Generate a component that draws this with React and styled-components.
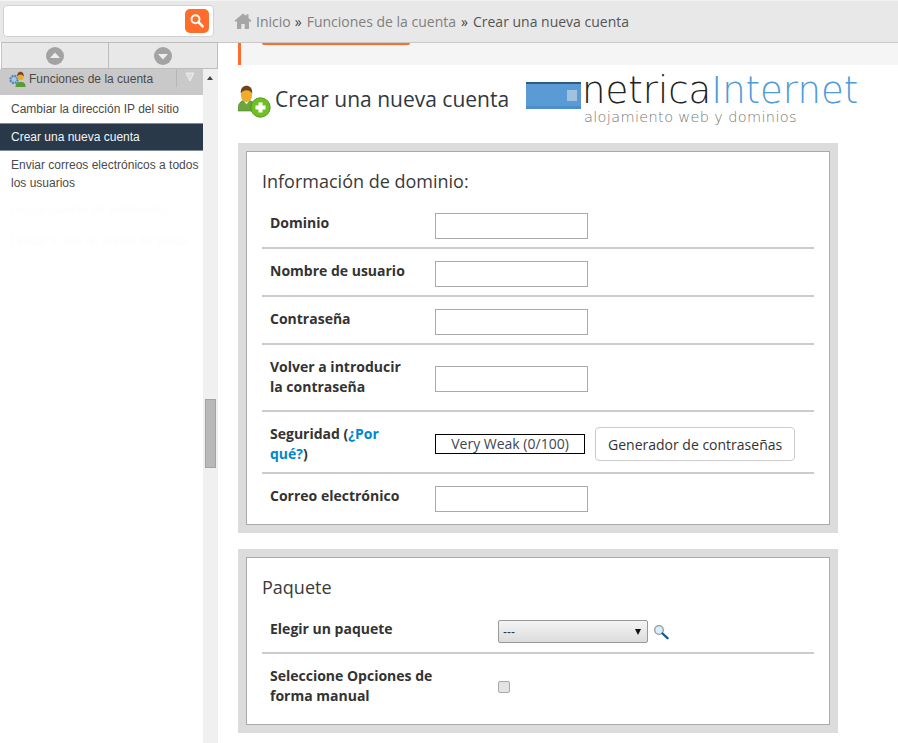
import React from "react";
import styled, { createGlobalStyle } from "styled-components";

const Global = createGlobalStyle`
  html, body { margin: 0; padding: 0; background: #fff; }
  body { font-family: "Open Sans", "Liberation Sans", sans-serif; color: #333; }
  * { box-sizing: border-box; }
`;

const Page = styled.div`
  display: grid;
  grid-template-columns: 218px 680px;
  width: 898px;
  height: 743px;
  overflow: hidden;
`;

const Sidebar = styled.aside`
  display: flex;
  flex-direction: column;
  height: 743px;
  font-family: "Liberation Sans", Arial, sans-serif;
`;

const SearchArea = styled.div`
  height: 42px;
  background: #e8e8e8;
  padding: 5px 4px 5px 3px;
  border-right: 1px solid #e8e8e8;
  border-top: 1px solid #f4f4f4;
`;

const SearchBox = styled.div`
  display: flex;
  align-items: center;
  justify-content: flex-end;
  width: 211px;
  height: 32px;
  margin-top: -1px;
  padding-right: 4px;
  background: #fff;
  border: 1px solid #d2d2d2;
  border-radius: 4px;
`;

const SearchButton = styled.button`
  display: flex;
  align-items: center;
  justify-content: center;
  width: 24px;
  height: 24px;
  padding: 0;
  border: 0;
  border-radius: 5px;
  background: #ff6c2c;
`;

const ArrowRow = styled.div`
  display: grid;
  grid-template-columns: 108px 109px;
  height: 27px;
  margin-left: 1px;
  background: #e8e8e8;
  border-top: 1px solid #bdbdbd;
  border-bottom: 1px solid #bdbdbd;
`;

const ArrowCell = styled.div`
  display: flex;
  align-items: center;
  justify-content: center;
  border-left: ${(p) => (p.$first ? "1px solid #c4c4c4" : "0")};
  border-right: 1px solid #bdbdbd;
`;

const SideBody = styled.div`
  display: grid;
  grid-template-columns: 203px 15px;
  flex: 1;
  min-height: 0;
`;

const SideList = styled.nav`
  background: #fff;
  overflow: hidden;
`;

const Category = styled.div`
  display: flex;
  align-items: center;
  height: 26px;
  padding-left: 9px;
  background: #c9c9c9;
  font-size: 12px;
  color: #4a4a4a;
`;

const CategoryGlyph = styled.span`
  display: flex;
  margin-top: -6px;
`;

const CategoryLabel = styled.span`
  margin-left: 3px;
  margin-top: -6px;
  width: 147px;
  white-space: nowrap;
`;

const CategoryToggle = styled.span`
  display: flex;
  justify-content: center;
  width: 27px;
  height: 18px;
  margin-top: -8px;
  padding-top: 3px;
  border-left: 1px solid #b6b6b6;
`;

const SideItem = styled.a`
  display: block;
  padding: 4px 4px 4px 11px;
  font-size: 12px;
  line-height: 18px;
  color: ${(p) => (p.$active ? "#f2f4f6" : "#4a4a4a")};
  background: ${(p) => (p.$active ? "#29394a" : "#fff")};
  border-top: 1px solid ${(p) => (p.$active ? "#7f8c98" : "transparent")};
  border-bottom: 1px solid ${(p) => (p.$active ? "#7f8c98" : "transparent")};
`;

const FadedGroup = styled.div`
  padding-top: 4px;
`;

const FadedItem = styled.div`
  padding-left: 11px;
  height: 31px;
  font-size: 12px;
  line-height: 18px;
  color: #fdfdfd;
  white-space: nowrap;
`;

const Track = styled.div`
  position: relative;
  background: #f0f0f0;
`;

const TrackArrow = styled.span`
  position: absolute;
  left: 4px;
  top: 7px;
  width: 0;
  height: 0;
  border-left: 3.5px solid transparent;
  border-right: 3.5px solid transparent;
  border-bottom: 4px solid #444;
`;

const Thumb = styled.div`
  position: absolute;
  left: 2px;
  top: 330px;
  width: 11px;
  height: 69px;
  background: #b9b9b9;
  border: 1px solid #a3a3a3;
`;

const Main = styled.main`
  display: flex;
  flex-direction: column;
  min-width: 0;
`;

const Breadcrumb = styled.header`
  display: flex;
  align-items: center;
  height: 43px;
  padding: 0 0 1px 16px;
  background: #e8e8e8;
  border-top: 1px solid #f2f2f2;
  border-bottom: 1px solid #c8c8c8;
  font-size: 14px;
  white-space: nowrap;
`;

const Crumb = styled.span`
  color: ${(p) => (p.$current ? "#555" : "#808080")};
  margin-left: ${(p) => (p.$first ? "4px" : "0")};
`;

const CrumbSep = styled.span`
  color: #444;
  margin: 0 5px 0 ${(p) => p.$before}px;
`;

const Content = styled.div`
  padding: 0 60px 0 20px;
`;

const Notice = styled.div`
  height: 22px;
  margin-right: -60px;
  padding-left: 21px;
  background: #f5f5f5;
  border-left: 3px solid #ff6c2c;
`;

const NoticeButton = styled.div`
  width: 148px;
  height: 2px;
  background: #ff6c2c;
  border-radius: 0 0 3px 3px;
`;

const TitleRow = styled.div`
  display: flex;
  align-items: flex-start;
  height: 78px;
`;

const PageIcon = styled.span`
  display: flex;
  flex: none;
  margin-top: 20px;
  width: 37px;
`;

const PageTitle = styled.h1`
  flex: none;
  margin: 18px 0 0;
  width: 251px;
  font-size: 21px;
  line-height: 32px;
  font-weight: 400;
  color: #2f3742;
  white-space: nowrap;
`;

const Logo = styled.div`
  display: flex;
  flex: none;
  align-items: flex-start;
  margin-top: 6px;
`;

const LogoMark = styled.span`
  display: flex;
  margin-top: 11px;
  margin-right: 1px;
`;

const LogoText = styled.div`
  font-family: "DejaVu Sans", sans-serif;
  font-weight: 200;
  white-space: nowrap;
`;

const LogoName = styled.div`
  font-size: 37px;
  line-height: 40px;
  color: #222;
`;

const LogoAccent = styled.span`
  color: #4f9bd9;
`;

const LogoTag = styled.div`
  font-size: 14.5px;
  line-height: 15px;
  margin: -1px 0 0 2px;
  letter-spacing: 0.35px;
  color: #777;
`;

const Section = styled.section`
  width: 600px;
  padding: 8px;
  margin-bottom: 16px;
  background: #dcdcdc;
`;

const SectionInner = styled.div`
  padding: 0 15px;
  background: #fff;
  border: 1px solid #aaa;
`;

const SectionTitle = styled.h2`
  margin: 0;
  padding-top: 16px;
  font-size: 18px;
  line-height: 26px;
  font-weight: 400;
  color: #3a3a3a;
`;

const Row = styled.div`
  display: grid;
  grid-template-columns: ${(p) => p.$label}px 1fr;
  align-items: ${(p) => (p.$center ? "center" : "start")};
  padding: ${(p) => p.$pad || "12px 0 8px"};
  border-bottom: ${(p) => (p.$last ? "0" : "2px solid #ccc")};
`;

const Label = styled.div`
  margin-top: ${(p) => p.$shift || 0}px;
  padding-left: 8px;
  padding-right: 20px;
  font-size: 14px;
  line-height: 20px;
  font-weight: 700;
  color: #333;
`;

const HelpLink = styled.a`
  color: #0086cc;
`;

const TextInput = styled.input`
  display: block;
  width: 153px;
  height: 26px;
  margin-top: ${(p) => p.$offset || 0}px;
  padding: 2px 4px;
  background: #fff;
  border: 1px solid #aaa;
`;

const StrengthRow = styled.div`
  display: flex;
  align-items: center;
`;

const Strength = styled.div`
  width: 150px;
  height: 20px;
  font-size: 14px;
  line-height: 18px;
  text-align: center;
  color: #3c4654;
  background: #fff;
  border: 1px solid #000;
`;

const GenButton = styled.button`
  height: 34px;
  margin-left: 10px;
  padding: 0 12px;
  font-family: "Open Sans", sans-serif;
  font-size: 14px;
  color: #333;
  background: #fff;
  border: 1px solid #ccc;
  border-radius: 4px;
`;

const SelectLine = styled.div`
  display: flex;
  align-items: center;
`;

const SelectWrap = styled.div`
  position: relative;
  width: 150px;
  height: 23px;
`;

const PackageSelect = styled.select`
  display: block;
  width: 100%;
  height: 100%;
  padding: 0 4px;
  appearance: none;
  font-family: "Liberation Sans", sans-serif;
  font-size: 12px;
  color: #333;
  background: linear-gradient(#f4f4f4, #dcdcdc);
  border: 1px solid #999;
  border-radius: 2px;
`;

const SelectCaret = styled.span`
  position: absolute;
  right: 7px;
  top: 9px;
  width: 0;
  height: 0;
  border-left: 3px solid transparent;
  border-right: 3px solid transparent;
  border-top: 6px solid #111;
`;

const ZoomIcon = styled.span`
  display: flex;
  margin-left: 5px;
`;

const Check = styled.input`
  display: block;
  width: 12px;
  height: 12px;
  margin: 2px 0 0;
  appearance: none;
  background: #e4e4e4;
  border: 1px solid #a8a8a8;
  border-radius: 2px;
`;

const SearchGlyph = () => (
  <svg width="16" height="16" viewBox="0 0 16 16">
    <circle cx="6.5" cy="6.2" r="4" fill="none" stroke="#fff" strokeWidth="1.9" />
    <path d="M9.5 9.2 13.6 13.4" stroke="#fff" strokeWidth="2.6" strokeLinecap="round" />
  </svg>
);

const ArrowCircle = ({ up }) => (
  <svg width="18" height="18" viewBox="0 0 18 18">
    <circle cx="9" cy="9" r="9" fill="#a3a3a3" />
    <path d={up ? "M9 5.5 14 11H4Z" : "M9 12.5 14 7H4Z"} fill="#eee" />
  </svg>
);

const Home = () => (
  <svg width="18" height="16" viewBox="0 0 18 16">
    <path d="M9 0.5 0.5 7.8 1.6 9 3 8v8h4.3v-5h3.4v5H15V8l1.4 1 1.1-1.2L14.5 5V1.3h-2.2v1.8Z" fill="#a6a6a6" />
  </svg>
);

const CategoryIcon = () => (
  <svg width="17" height="16" viewBox="0 0 17 16">
    <circle cx="5" cy="8.5" r="3.6" fill="#a9c6e0" stroke="#4f86ba" strokeWidth="2.2" strokeDasharray="2 .8" />
    <path d="M6.5 16c0-3.500 1.500-5 3.500-5h3c2 0 3.600 1.500 3.600 5Z" fill="#5c9a36" />
    <circle cx="11.5" cy="6" r="3.2" fill="#eea92f" />
    <path d="M8.2 5.500C8 2 10 .8 11.500 .8s3.500 1.200 3.300 4.700c-1-1.500-2-1.800-3.300-1.800s-2.300.3-3.300 1.800Z" fill="#7a4a1c" />
  </svg>
);

const UserAdd = () => (
  <svg width="33" height="33" viewBox="0 0 33 33">
    <path d="M0 24c0-5 2-7 5-8.500h7c3 1.500 6 3.500 6 8.500v2H0Z" fill="#6aa63c" stroke="#4d8128" strokeWidth=".6" />
    <path d="M5.500 15.500l3 4 3-4Z" fill="#e4f0d0" />
    <ellipse cx="8.5" cy="10" rx="5.600" ry="7" fill="#f1ab2d" />
    <path d="M2.800 8.500C2.300 3 5.500 .8 8.500 .8s6.200 2.200 5.700 7.700c-1.500-2.500-3.200-3.300-5.700-3.300S4.300 6 2.800 8.500Z" fill="#6e4419" />
    <circle cx="22.5" cy="22.500" r="9.7" fill="#6fc020" stroke="#4d8f1c" strokeWidth=".9" />
    <path d="M20.500 17.500h4v3h3v4h-3v3h-4v-3h-3v-4h3Z" fill="#fff" />
  </svg>
);

const LogoBlock = () => (
  <svg width="55" height="27" viewBox="0 0 55 27">
    <rect width="55" height="27" fill="#5a9bd5" />
    <rect width="55" height="2" fill="#2f5d82" />
    <rect y="24" width="55" height="3" fill="#4a8fcc" />
    <rect x="41" y="8" width="10" height="11" fill="#a0c2de" />
  </svg>
);

const Magnifier = () => (
  <svg width="16" height="16" viewBox="0 0 16 16">
    <circle cx="6" cy="6" r="4.3" fill="#dcecf8" stroke="#8a9aa8" strokeWidth="1.3" />
    <path d="M9.5 9.500 14.500 14.200" stroke="#0f5a96" strokeWidth="2.3" strokeLinecap="round" />
  </svg>
);

const Toggle = () => (
  <svg width="10" height="10" viewBox="0 0 10 10">
    <path d="M1 1h8L5 9Z" fill="#dcdcdc" stroke="#f2f2f2" strokeWidth=".8" />
  </svg>
);

export default function App() {
  return (
    <Page>
      <Global />
      <Sidebar>
        <SearchArea>
          <SearchBox>
            <SearchButton aria-label="Buscar">
              <SearchGlyph />
            </SearchButton>
          </SearchBox>
        </SearchArea>
        <ArrowRow>
          <ArrowCell $first>
            <ArrowCircle up />
          </ArrowCell>
          <ArrowCell>
            <ArrowCircle />
          </ArrowCell>
        </ArrowRow>
        <SideBody>
          <SideList>
            <Category>
              <CategoryGlyph>
                <CategoryIcon />
              </CategoryGlyph>
              <CategoryLabel>Funciones de la cuenta</CategoryLabel>
              <CategoryToggle>
                <Toggle />
              </CategoryToggle>
            </Category>
            <SideItem>Cambiar la dirección IP del sitio</SideItem>
            <SideItem $active>Crear una nueva cuenta</SideItem>
            <SideItem>Enviar correos electrónicos a todos los usuarios</SideItem>
            <FadedGroup>
              <FadedItem>Forzar cambio de contraseña</FadedItem>
              <FadedItem>Limitar el uso de ancho de banda</FadedItem>
            </FadedGroup>
          </SideList>
          <Track>
            <TrackArrow />
            <Thumb />
          </Track>
        </SideBody>
      </Sidebar>
      <Main>
        <Breadcrumb>
          <Home />
          <Crumb $first>Inicio</Crumb>
          <CrumbSep $before={4}>»</CrumbSep>
          <Crumb>Funciones de la cuenta</Crumb>
          <CrumbSep $before={5}>»</CrumbSep>
          <Crumb $current>Crear una nueva cuenta</Crumb>
        </Breadcrumb>
        <Content>
          <Notice>
            <NoticeButton />
          </Notice>
          <TitleRow>
            <PageIcon>
              <UserAdd />
            </PageIcon>
            <PageTitle>Crear una nueva cuenta</PageTitle>
            <Logo>
              <LogoMark>
                <LogoBlock />
              </LogoMark>
              <LogoText>
                <LogoName>
                  netrica<LogoAccent>Internet</LogoAccent>
                </LogoName>
                <LogoTag>alojamiento web y dominios</LogoTag>
              </LogoText>
            </Logo>
          </TitleRow>
          <Section>
            <SectionInner>
              <SectionTitle>Información de dominio:</SectionTitle>
              <Row $label={173} $pad="19px 0 8px">
                <Label>Dominio</Label>
                <TextInput />
              </Row>
              <Row $label={173}>
                <Label>Nombre de usuario</Label>
                <TextInput />
              </Row>
              <Row $label={173}>
                <Label>Contraseña</Label>
                <TextInput />
              </Row>
              <Row $label={173} $pad="12px 0 13px">
                <Label>Volver a introducir la contraseña</Label>
                <TextInput $offset={9} />
              </Row>
              <Row $label={173} $pad="12px 0 8px" $center>
                <Label>
                  Seguridad (<HelpLink>¿Por qué?</HelpLink>)
                </Label>
                <StrengthRow>
                  <Strength>Very Weak (0/100)</Strength>
                  <GenButton>Generador de contraseñas</GenButton>
                </StrengthRow>
              </Row>
              <Row $label={173} $pad="12px 0 12px" $last>
                <Label>Correo electrónico</Label>
                <TextInput />
              </Row>
            </SectionInner>
          </Section>
          <Section>
            <SectionInner>
              <SectionTitle>Paquete</SectionTitle>
              <Row $label={236} $pad="20px 0 9px">
                <Label $shift={-1}>Elegir un paquete</Label>
                <SelectLine>
                  <SelectWrap>
                    <PackageSelect>
                      <option>---</option>
                    </PackageSelect>
                    <SelectCaret />
                  </SelectWrap>
                  <ZoomIcon>
                    <Magnifier />
                  </ZoomIcon>
                </SelectLine>
              </Row>
              <Row $label={236} $pad="12px 0 18px" $center $last>
                <Label>Seleccione Opciones de forma manual</Label>
                <Check type="checkbox" />
              </Row>
            </SectionInner>
          </Section>
        </Content>
      </Main>
    </Page>
  );
}
